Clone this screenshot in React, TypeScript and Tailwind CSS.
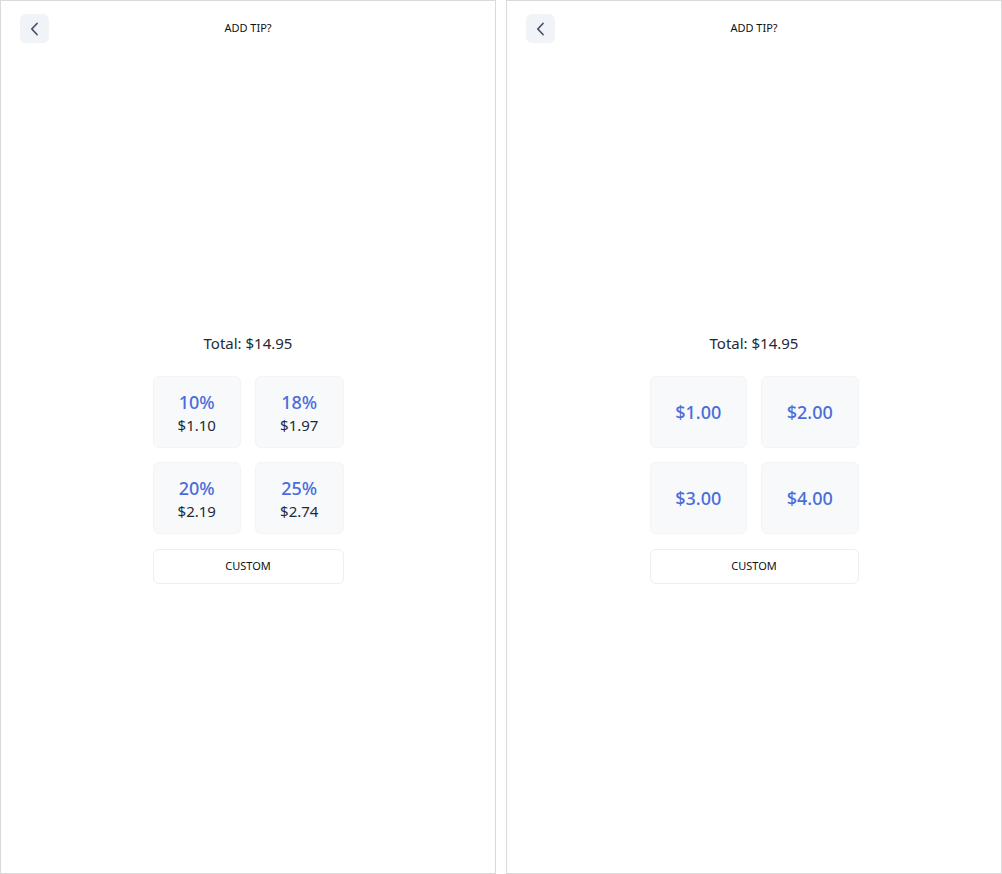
import React from "react";

const font = { fontFamily: '"Noto Sans", "Open Sans", sans-serif' };

function Header() {
  return (
    <div className="relative h-[56px] shrink-0">
      <button className="absolute left-[19px] top-[13px] flex h-[29px] w-[29px] items-center justify-center rounded-[6px] bg-[#f0f3f8]">
        <svg width="14" height="14" viewBox="0 0 14 14" fill="none">
          <path d="M9 1.5 L3.8 7 L9 12.5" stroke="#475467" strokeWidth="1.8" strokeLinecap="round" strokeLinejoin="round" />
        </svg>
      </button>
      <div className="absolute left-0 right-0 top-[19px] text-center text-[11px] leading-[16px] text-[#111]">ADD TIP?</div>
    </div>
  );
}

function Panel({ children, width }: { children: React.ReactNode; width: string }) {
  return (
    <div className="flex h-[874px] w-[496px] flex-col border border-[#dadada] bg-white" style={font}>
      <Header />
      <div className="flex flex-col items-center pt-[276px]">
        <div className="text-[15px] leading-[20px] text-[#1f2937]">Total: $14.95</div>
        <div className={`mt-[23px] flex flex-col gap-[15px] ${width}`}>{children}</div>
      </div>
    </div>
  );
}

function PctCard({ pct, amt }: { pct: string; amt: string }) {
  return (
    <div className="flex h-[72px] flex-col items-center justify-center gap-[1px] rounded-[6px] border border-[#f3f4f7] bg-[#f8f9fb]">
      <div className="text-[18px] font-medium leading-[24px] text-[#4a6ddb]">{pct}</div>
      <div className="text-[15px] leading-[20px] text-[#1f2937]">{amt}</div>
    </div>
  );
}

function AmtCard({ amt }: { amt: string }) {
  return (
    <div className="flex h-[72px] items-center justify-center rounded-[6px] border border-[#f3f4f7] bg-[#f8f9fb]">
      <div className="text-[18px] font-medium leading-[24px] text-[#4a6ddb]">{amt}</div>
    </div>
  );
}

function Custom() {
  return (
    <button className="flex h-[35px] w-full items-center justify-center rounded-[6px] border border-[#eceef1] bg-white text-[11px] text-[#111]">
      CUSTOM
    </button>
  );
}

export default function App() {
  return (
    <div className="flex h-[874px] w-[1002px] gap-[10px] bg-white">
      <Panel width="w-[191px]">
        <div className="grid grid-cols-2 gap-[14px]">
          <PctCard pct="10%" amt="$1.10" />
          <PctCard pct="18%" amt="$1.97" />
          <PctCard pct="20%" amt="$2.19" />
          <PctCard pct="25%" amt="$2.74" />
        </div>
        <Custom />
      </Panel>
      <Panel width="w-[209px]">
        <div className="grid grid-cols-2 gap-[14px]">
          <AmtCard amt="$1.00" />
          <AmtCard amt="$2.00" />
          <AmtCard amt="$3.00" />
          <AmtCard amt="$4.00" />
        </div>
        <Custom />
      </Panel>
    </div>
  );
}
